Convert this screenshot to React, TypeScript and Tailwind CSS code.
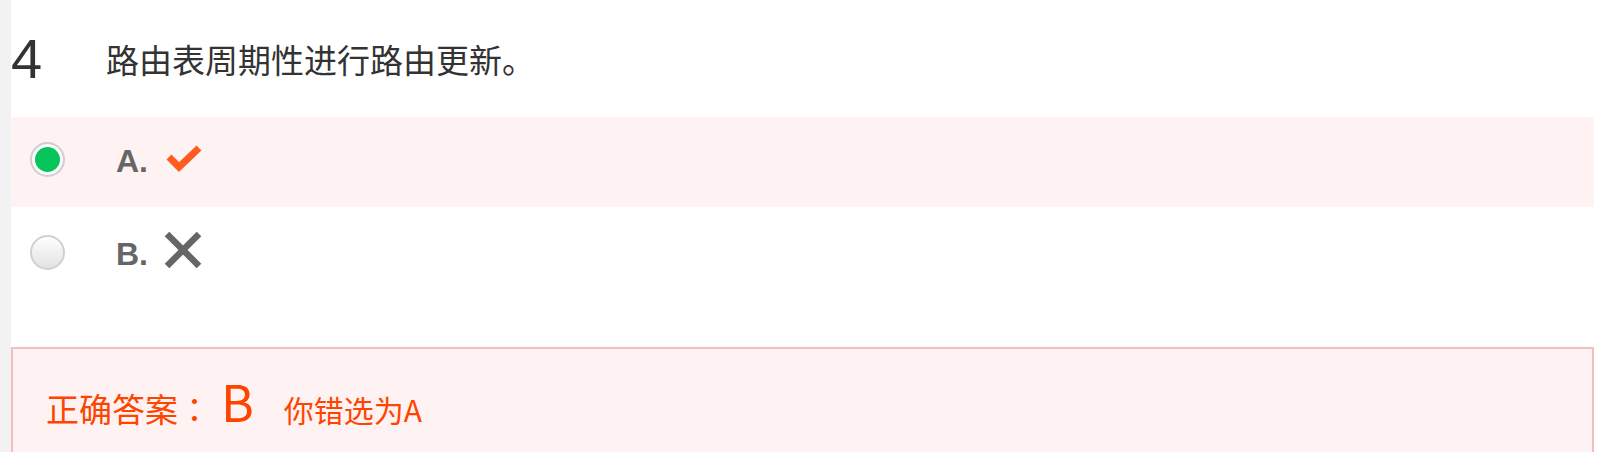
import React from "react";

const cjk = { fontFamily: '"Noto Sans CJK SC", "Noto Sans", sans-serif' };
const cjkTc = { fontFamily: '"Noto Sans CJK TC", "Noto Sans", sans-serif' };
const latin = { fontFamily: '"Liberation Sans", Arial, sans-serif' };

function RadioOn() {
  return (
    <div className="w-[35px] h-[35px] rounded-full border-2 border-[#cfcfcf] bg-white flex items-center justify-center shadow-[inset_0_0_1px_rgba(0,0,0,0.15)]">
      <div className="w-[25px] h-[25px] rounded-full bg-[#07c55a]" />
    </div>
  );
}

function RadioOff() {
  return (
    <div className="w-[35px] h-[35px] rounded-full border-2 border-[#d0d0d0] bg-gradient-to-b from-[#ffffff] to-[#e2e2e2]" />
  );
}

function Check() {
  return (
    <svg width="40" height="32" viewBox="0 0 40 32">
      <polyline points="5,14 15,24 35,5" fill="none" stroke="#ff5c1f" strokeWidth="7" />
    </svg>
  );
}

function Cross() {
  return (
    <svg width="38" height="38" viewBox="0 0 38 38">
      <line x1="3" y1="3" x2="35" y2="35" stroke="#666666" strokeWidth="6.5" />
      <line x1="35" y1="3" x2="3" y2="35" stroke="#666666" strokeWidth="6.5" />
    </svg>
  );
}

export default function App() {
  return (
    <div className="w-[1610px] h-[452px] overflow-hidden bg-white flex">
      <div className="w-[11px] shrink-0 bg-[#f2f2f2]" />
      <div className="w-[1583px] shrink-0 flex flex-col">
        <div className="h-[117px] shrink-0 flex items-center">
          <div className="w-[95px] text-[56px] leading-none text-[#333333]" style={latin}>
            4
          </div>
          <div className="text-[33px] leading-none text-[#333333] pt-[2px]" style={cjk}>
            路由表周期性进行路由更新。
          </div>
        </div>

        <div className="h-[90px] shrink-0 bg-[#fef2f2] flex items-center pl-[19px] pb-[5px]">
          <RadioOn />
          <div className="ml-[51px] text-[32px] font-bold leading-none text-[#666666] pt-[2px]" style={latin}>
            A.
          </div>
          <div className="ml-[16px] pb-[2px]">
            <Check />
          </div>
        </div>

        <div className="h-[90px] shrink-0 flex items-center pl-[19px]">
          <RadioOff />
          <div className="ml-[51px] text-[32px] font-bold leading-none text-[#666666] pt-[4px]" style={latin}>
            B.
          </div>
          <div className="ml-[16px] pb-[4px]">
            <Cross />
          </div>
        </div>

        <div className="mt-[50px] h-[140px] shrink-0 border-2 border-[#f5bebe] bg-[#fef2f2] pl-[33px] pt-[26px] flex items-baseline text-[#ff4400]" style={cjk}>
          <span className="text-[33px] leading-none">
            正确答案<span style={cjkTc}>：</span>
          </span>
          <span className="ml-[10px] text-[50px] leading-none">B</span>
          <span className="ml-[30px] text-[30px] leading-none">你错选为A</span>
        </div>
      </div>
    </div>
  );
}
